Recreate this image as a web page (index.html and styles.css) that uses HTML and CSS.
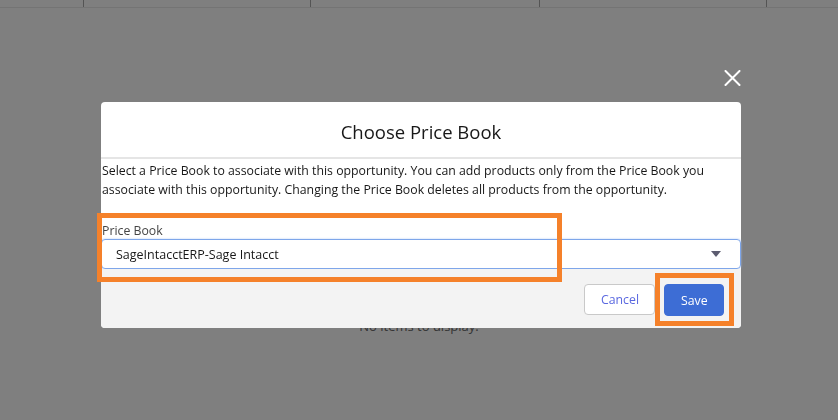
FILE: index.html
```html
<!DOCTYPE html>
<html lang="en">
<head>
    <meta charset="UTF-8">
    <meta name="viewport" content="width=device-width, initial-scale=1.0">
    <title>Choose Price Book</title>
    <link rel="stylesheet" href="styles.css">
</head>
<body>

    <!-- Page behind the modal -->
    <div class="page">
        <div class="grid-head">
            <div class="col col-1"></div>
            <div class="col col-2"></div>
            <div class="col col-3"></div>
            <div class="col col-4"></div>
            <div class="col col-5"></div>
        </div>
        <p class="empty">No items to display.</p>
    </div>

    <!-- Backdrop + modal -->
    <div class="backdrop">
        <div class="modal-container">
            <div class="close-row">
                <button class="close" title="Close">
                    <svg width="17" height="16" viewBox="0 0 17 16">
                        <path d="M1.5 1 L15.5 15 M15.5 1 L1.5 15" stroke="#fff" stroke-width="2" stroke-linecap="round"/>
                    </svg>
                </button>
            </div>

            <div class="modal">
                <div class="modal-header">
                    <h2>Choose Price Book</h2>
                </div>

                <div class="modal-content">
                    <p class="intro">Select a Price Book to associate with this opportunity. You can add products only from the Price Book you associate with this opportunity. Changing the Price Book deletes all products from the opportunity.</p>

                    <label class="field-label" for="priceBook">Price Book</label>
                    <div class="select">
                        <span id="priceBook">SageIntacctERP-Sage Intacct</span>
                        <svg width="10" height="7" viewBox="0 0 10 7">
                            <path d="M0 0 L10 0 L5 6 Z" fill="#5c5c70"/>
                        </svg>
                    </div>
                </div>

                <div class="modal-footer">
                    <button class="btn btn-neutral">Cancel</button>
                    <button class="btn btn-brand">Save</button>
                </div>

                <!-- Annotation boxes -->
                <div class="mark mark-field"></div>
                <div class="mark mark-save"></div>
            </div>
        </div>
    </div>

</body>
</html>
```

FILE: styles.css
```css
body {
    margin: 0;
    font-family: "Open Sans", "Noto Sans", sans-serif;
    background: #fff;
    color: #181818;
}

.page {
    height: 420px;
    overflow: hidden;
}

.grid-head {
    display: flex;
    height: 7px;
    border-bottom: 1px solid #e8e8e8;
}

.col {
    border-right: 1px solid #a8a8a8;
}

.col-1 { width: 83px; }
.col-2 { width: 226px; }
.col-3 { width: 228px; }
.col-4 { width: 226px; }
.col-5 { flex: 1; border-right: none; }

.empty {
    margin: 309px 0 0;
    text-align: center;
    font-size: 13px;
    color: #6a6a6a;
    line-height: 18px;
}

/* Modal */
.backdrop {
    position: fixed;
    inset: 0;
    background: rgba(0, 0, 0, 0.5);
    padding: 70px 0 0 101px;
}

.modal-container {
    width: 640px;
}

.close-row {
    display: flex;
    justify-content: flex-end;
    height: 32px;
}

.close {
    background: none;
    border: none;
    padding: 0;
    width: 17px;
    height: 16px;
    cursor: pointer;
}

.close svg {
    display: block;
}

.modal {
    position: relative;
    background: #fff;
    border-radius: 4px;
}

.modal-header {
    height: 55px;
    border-bottom: 2px solid #e5e5e5;
    display: flex;
    align-items: center;
    justify-content: center;
}

.modal-header h2 {
    margin: 0;
    font-size: 18.5px;
    font-weight: normal;
    color: #181818;
    padding-top: 4px;
}

.modal-content {
    padding: 2px 16px 0 1px;
}

.intro {
    margin: 0;
    font-size: 12.3px;
    line-height: 19px;
    color: #181818;
}

.field-label {
    display: block;
    margin-top: 23px;
    font-size: 12.3px;
    line-height: 17px;
    color: #444;
}

.select {
    display: flex;
    align-items: center;
    justify-content: space-between;
    height: 28px;
    margin: 0 -16px 0 -1px;
    padding: 0 19px 0 14px;
    border: 1px solid #7ea6ea;
    border-radius: 4px;
    box-shadow: 0 0 2px #a9c4f2;
    font-size: 12.5px;
    color: #181818;
}

.modal-footer {
    display: flex;
    justify-content: flex-end;
    gap: 9px;
    background: #f3f3f3;
    padding: 15px 17px 12px;
    border-radius: 0 0 4px 4px;
}

.btn {
    height: 31px;
    padding: 0 16px;
    font-family: inherit;
    font-size: 12.3px;
    border-radius: 4px;
    cursor: pointer;
}

.btn-neutral {
    width: 71px;
    background: #fff;
    border: 1px solid #c9c9c9;
    color: #5a68e0;
}

.btn-brand {
    width: 60px;
    height: 32px;
    background: #3d6dd5;
    border: 1px solid #3d6dd5;
    color: #fff;
}

/* Orange highlight boxes */
.mark {
    position: absolute;
    border: 5px solid #f5812a;
    box-sizing: border-box;
}

.mark-field {
    left: -4px;
    top: 111px;
    width: 465px;
    height: 69px;
}

.mark-save {
    left: 554px;
    top: 171px;
    width: 79px;
    height: 53px;
}
```
